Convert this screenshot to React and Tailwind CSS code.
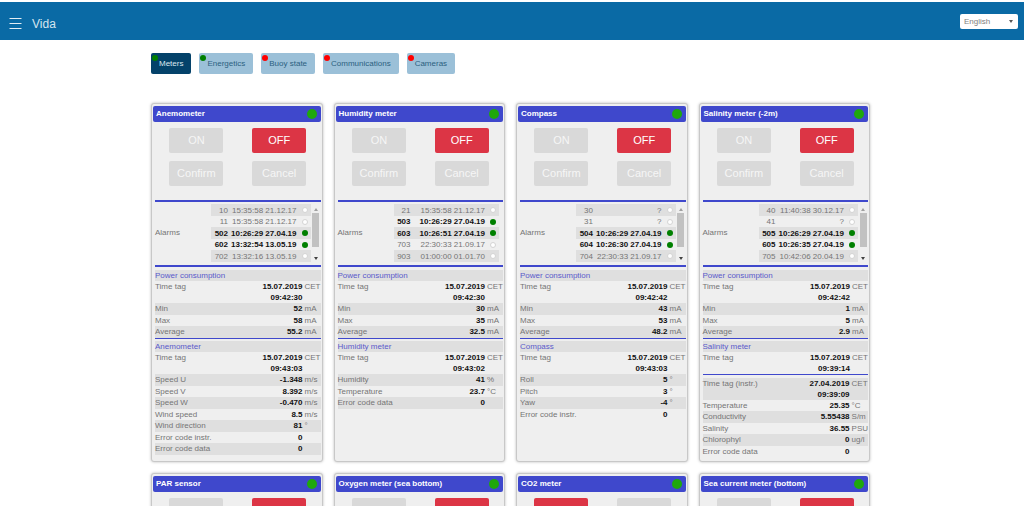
import React, { useState } from "react";

const TABS = [
  { name: "Meters", ok: true },
  { name: "Energetics", ok: true },
  { name: "Buoy state", ok: false },
  { name: "Communications", ok: false },
  { name: "Cameras", ok: false },
];

const power = (time, min, max, avg) => ({
  title: "Power consumption",
  rows: [
    ["Time tag", `15.07.2019 ${time}`, "CET"],
    ["Min", min, "mA"],
    ["Max", max, "mA"],
    ["Average", avg, "mA"],
  ],
});

const METERS = [
  {
    name: "Anemometer",
    on: false,
    scroll: true,
    // code, time, active
    alarms: [
      ["10", "15:35:58 21.12.17", false],
      ["11", "15:35:58 21.12.17", false],
      ["502", "10:26:29 27.04.19", true],
      ["602", "13:32:54 13.05.19", true],
      ["702", "13:32:16 13.05.19", false],
    ],
    sections: [
      power("09:42:30", "52", "58", "55.2"),
      {
        title: "Anemometer",
        rows: [
          ["Time tag", "15.07.2019 09:43:03", "CET"],
          ["Speed U", "-1.348", "m/s"],
          ["Speed V", "8.392", "m/s"],
          ["Speed W", "-0.470", "m/s"],
          ["Wind speed", "8.5", "m/s"],
          ["Wind direction", "81", "°"],
          ["Error code instr.", "0", ""],
          ["Error code data", "0", ""],
        ],
      },
    ],
  },
  {
    name: "Humidity meter",
    on: false,
    scroll: false,
    alarms: [
      ["21", "15:35:58 21.12.17", false],
      ["503", "10:26:29 27.04.19", true],
      ["603", "10:26:51 27.04.19", true],
      ["703", "22:30:33 21.09.17", false],
      ["903", "01:00:00 01.01.70", false],
    ],
    sections: [
      power("09:42:30", "30", "35", "32.5"),
      {
        title: "Humidity meter",
        rows: [
          ["Time tag", "15.07.2019 09:43:02", "CET"],
          ["Humidity", "41", "%"],
          ["Temperature", "23.7", "°C"],
          ["Error code data", "0", ""],
        ],
      },
    ],
  },
  {
    name: "Compass",
    on: false,
    scroll: true,
    alarms: [
      ["30", "?", false],
      ["31", "?", false],
      ["504", "10:26:29 27.04.19", true],
      ["604", "10:26:30 27.04.19", true],
      ["704", "22:30:33 21.09.17", false],
    ],
    sections: [
      power("09:42:42", "43", "53", "48.2"),
      {
        title: "Compass",
        rows: [
          ["Time tag", "15.07.2019 09:43:03", "CET"],
          ["Roll", "5", "°"],
          ["Pitch", "3", "°"],
          ["Yaw", "-4", "°"],
          ["Error code instr.", "0", ""],
        ],
      },
    ],
  },
  {
    name: "Salinity meter (-2m)",
    on: false,
    scroll: true,
    alarms: [
      ["40", "11:40:38 30.12.17", false],
      ["41", "?", false],
      ["505", "10:26:29 27.04.19", true],
      ["605", "10:26:35 27.04.19", true],
      ["705", "10:42:06 20.04.19", false],
    ],
    sections: [
      power("09:42:42", "1", "5", "2.9"),
      {
        title: "Salinity meter",
        rows: [["Time tag", "15.07.2019 09:39:14", "CET"]],
      },
      {
        rows: [
          ["Time tag (instr.)", "27.04.2019 09:39:09", "CET"],
          ["Temperature", "25.35", "°C"],
          ["Conductivity", "5.55438", "S/m"],
          ["Salinity", "36.55", "PSU"],
          ["Chlorophyl", "0", "ug/l"],
          ["Error code data", "0", ""],
        ],
      },
    ],
  },
  { name: "PAR sensor", on: false },
  { name: "Oxygen meter (sea bottom)", on: false },
  { name: "CO2 meter", on: true },
  { name: "Sea current meter (bottom)", on: false },
];

const ControlButton = ({ active, children }) => (
  <button
    type="button"
    className={`h-[25px] w-[54px] rounded-[2px] text-[11px] leading-none ${
      active ? "bg-[#dc3545] text-white" : "bg-[#d9d9d9] text-[#f6f6f6]"
    }`}
  >
    {children}
  </button>
);

const ScrollRail = () => (
  <div className="ml-px flex w-2 flex-col items-center justify-between pt-1 pb-[2px]">
    <svg viewBox="0 0 4 3" className="h-[3px] w-1">
      <path d="M0 3L2 0L4 3Z" fill="#a0a0a0" />
    </svg>
    <div className="mb-[10px] mt-[2px] w-[7px] flex-1 bg-[#c1c1c1]" />
    <svg viewBox="0 0 4 3" className="h-[3px] w-1">
      <path d="M0 0L2 3L4 0Z" fill="#404040" />
    </svg>
  </div>
);

const Alarms = ({ alarms, scroll }) => (
  <div className="mt-[2px] mr-px mb-[3px] flex items-stretch">
    <span className="flex w-14 items-center">Alarms</span>
    <table className={`flex-1 border-collapse ${scroll ? "" : "mr-[3px]"}`}>
      <tbody>
        {alarms.map(([code, time, active]) => (
          <tr
            key={code}
            className={`h-[11px] odd:h-3 odd:bg-[#dfdfdf] ${
              active ? "font-bold text-[#111]" : ""
            }`}
          >
            <td className="w-[17px] p-0 text-right leading-[11px]">{code}</td>
            <td className="whitespace-nowrap p-0 text-right leading-[11px]">
              {time}
            </td>
            <td className="w-[14px] p-0">
              <div
                className={`ml-auto mr-[3px] size-[6px] rounded-full ${
                  active ? "bg-[#008000]" : "border border-[#d4d4d4] bg-white"
                }`}
              />
            </td>
          </tr>
        ))}
      </tbody>
    </table>
    {scroll && <ScrollRail />}
  </div>
);

const Section = ({ title, rows }) => (
  <section className={title ? "" : "pt-px"}>
    {title && (
      <h3 className="bg-[#dfdfdf] leading-[11px] text-[#5a5acb]">{title}</h3>
    )}
    <table className="w-full border-collapse">
      <tbody>
        {rows.map(([label, value, unit], i) => {
          const shaded = title ? i % 2 === 1 : i % 2 === 0;
          const tall = shaded && !label.startsWith("Time tag");
          return (
            <tr
              key={label}
              className={`align-top ${tall ? "h-3" : "h-[11px]"} ${
                shaded ? "bg-[#dfdfdf]" : ""
              }`}
            >
              <th
                scope="row"
                className="p-0 text-left font-normal leading-[11px]"
              >
                {label}
              </th>
              <td className="w-12 p-0 text-right font-bold leading-[11px] text-[#111]">
                {value}
              </td>
              <td className="w-[18px] p-0 pl-[2px] leading-[11px]">{unit}</td>
            </tr>
          );
        })}
      </tbody>
    </table>
  </section>
);

const MeterCard = ({ meter }) => (
  <article className="rounded-[3px] border border-[#c8c8c8] bg-[#efefef] px-px pt-[2px] pb-1 shadow-[0_0_3px_#bbb]">
    <header className="flex h-4 items-center justify-between rounded-[2px] bg-[#3f48cc] pl-[3px] pr-1">
      <h2 className="font-bold leading-none text-white">{meter.name}</h2>
      <span className="size-[10px] rounded-full bg-[#1fa80c]" />
    </header>

    <div className="ml-[2px]">
      <div className="grid grid-cols-2 justify-items-center gap-y-2 pt-[6px] pb-[14px]">
        <ControlButton active={meter.on}>ON</ControlButton>
        <ControlButton active={!meter.on}>OFF</ControlButton>
        <ControlButton>Confirm</ControlButton>
        <ControlButton>Cancel</ControlButton>
      </div>

      <div className="h-[2px] bg-[#3f48cc]" />
      {meter.alarms && (
        <>
          <Alarms alarms={meter.alarms} scroll={meter.scroll} />
          <div className="mb-[3px] h-[2px] bg-[#3f48cc]" />
        </>
      )}

      {meter.sections?.map((section, i) => (
        <React.Fragment key={i}>
          {i > 0 && <div className="mb-[2px] h-px bg-[#3f48cc]" />}
          <Section {...section} />
        </React.Fragment>
      ))}
    </div>
  </article>
);

export default function App() {
  const [tab, setTab] = useState("Meters");

  return (
    <div className="h-screen overflow-y-auto bg-white font-['Liberation_Sans',Arial,sans-serif] text-[8px] text-[#757575] [scrollbar-width:none]">
      {/* Top bar */}
      <header className="mt-[2px] flex h-[38px] items-center bg-[#0a6aa5] pl-[9px] pr-[6px]">
        <button type="button" aria-label="Menu" className="pt-1">
          <svg viewBox="0 0 13 12" className="h-3 w-[13px]">
            <path
              d="M0.5 1.5H12.5M0.5 6.5H12.5M0.5 11.5H12.5"
              stroke="#e2edf4"
              strokeWidth="1"
            />
          </svg>
        </button>
        <h1 className="ml-[10px] pt-[6px] text-[12px] leading-none text-[#d5e5ef]">
          Vida
        </h1>
        <div className="relative ml-auto">
          <select
            aria-label="Language"
            defaultValue="English"
            className="block h-[15px] w-[58px] appearance-none rounded-[2px] bg-white pl-1 pt-[2px] leading-none text-[#808080]"
          >
            <option>English</option>
          </select>
          <svg
            viewBox="0 0 4 3"
            className="pointer-events-none absolute right-[5px] top-[6px] h-[3px] w-1"
          >
            <path d="M0 0L2 3L4 0Z" fill="#555" />
          </svg>
        </div>
      </header>

      <main className="mx-auto max-w-[722px] pr-[3px] pb-3">
        {/* Tabs */}
        <nav className="flex gap-2 pt-[13px]">
          {TABS.map(({ name, ok }) => (
            <button
              key={name}
              type="button"
              onClick={() => setTab(name)}
              className={`relative h-[21px] rounded-[2px] px-2 leading-none ${
                tab === name
                  ? "bg-[#04426a] text-[#dde8ef]"
                  : "bg-[#9bc0d8] text-[#2b6080]"
              }`}
            >
              {name}
              <span
                className={`absolute left-[1px] top-[2px] size-[6px] rounded-full ${
                  ok ? "bg-[#008000]" : "bg-[#ff0000]"
                }`}
              />
            </button>
          ))}
        </nav>

        {/* Meters */}
        <div className="mt-[29px] grid grid-cols-4 gap-[11px]">
          {METERS.map((meter) => (
            <MeterCard key={meter.name} meter={meter} />
          ))}
        </div>
      </main>
    </div>
  );
}
